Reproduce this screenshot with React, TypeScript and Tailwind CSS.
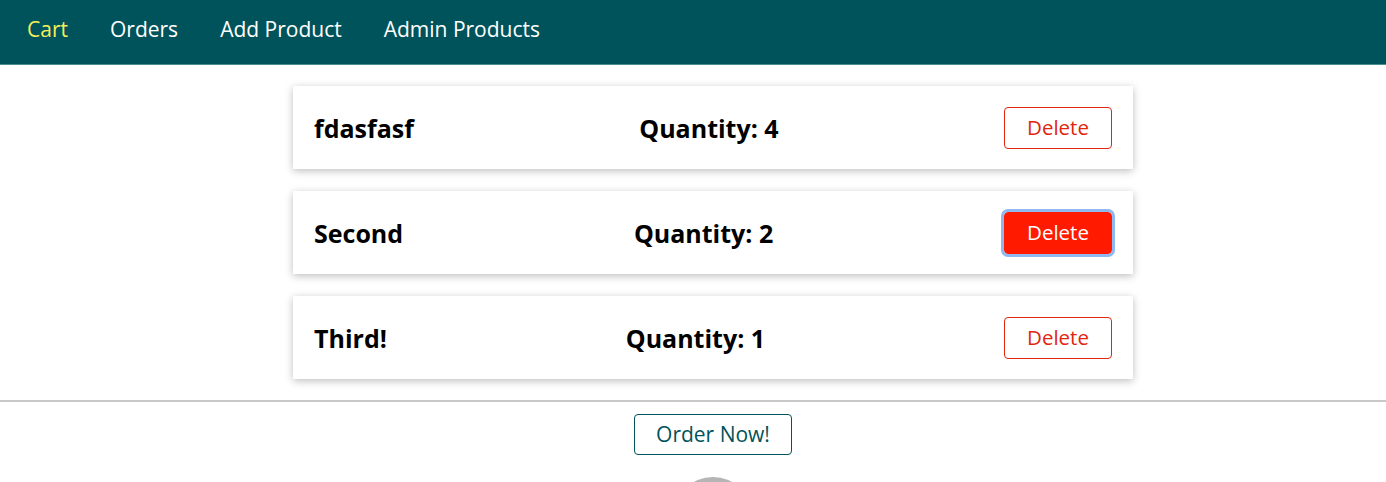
import React from "react";

const items = [
  { title: "fdasfasf", qty: 4, active: false },
  { title: "Second", qty: 2, active: true },
  { title: "Third!", qty: 1, active: false },
];

const CartItem = ({ title, qty, active }: { title: string; qty: number; active: boolean }) => (
  <li className="flex items-center justify-between h-[83px] px-[21px] bg-white shadow-[0_2px_8px_rgba(0,0,0,0.26)]">
    <h2 className="text-[25px] font-bold text-black leading-none mt-[2px]">{title}</h2>
    <h2 className="text-[25px] font-bold text-black leading-none mt-[2px]">Quantity: {qty}</h2>
    <button
      className={
        active
          ? "w-[108px] h-[42px] rounded-[4px] border border-[#ff1a00] bg-[#ff1a00] text-white text-[20.5px] outline-[3px] outline-[#8fb8f0] outline-offset-0"
          : "w-[108px] h-[42px] rounded-[4px] border border-[#e0260f] bg-white text-[#e0260f] text-[20.5px]"
      }
    >
      Delete
    </button>
  </li>
);

export default function App() {
  return (
    <div className="min-h-screen bg-white font-['Open_Sans',sans-serif] overflow-hidden">
      <header className="h-[65px] bg-[#00535a] border-b border-[#4a8f94] flex items-center px-[27px]">
        <nav>
          <ul className="flex gap-[42px] text-[21px] -mt-[5px]">
            <li className="text-[#f4f05a]">Cart</li>
            <li className="text-white">Orders</li>
            <li className="text-white">Add Product</li>
            <li className="text-white">Admin Products</li>
          </ul>
        </nav>
      </header>
      <main>
        <div className="pl-[40px] pt-[21px]">
          <ul className="w-[840px] mx-auto flex flex-col gap-[22px]">
            {items.map((it) => (
              <CartItem key={it.title} {...it} />
            ))}
          </ul>
        </div>
        <hr className="mt-[21px] border-t-2 border-[#c8c8c8]" />
        <div className="pl-[40px] pt-[12px] flex flex-col items-center gap-[22px]">
          <button className="w-[158px] h-[41px] rounded-[4px] border border-[#00535a] text-[#00535a] text-[21px]">
            Order Now!
          </button>
          <div className="w-[80px] h-[80px] rounded-full border-[5px] border-[#b5b5b5] border-b-transparent" />
        </div>
      </main>
    </div>
  );
}
